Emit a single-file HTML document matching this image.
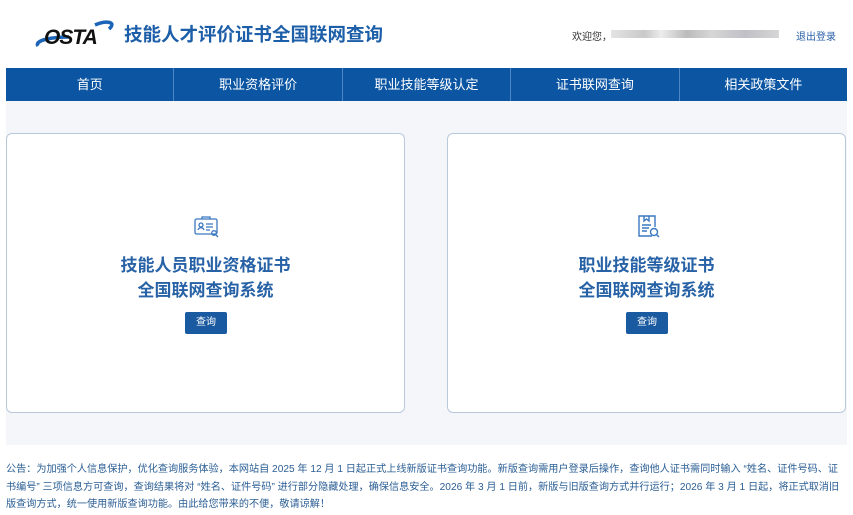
<!DOCTYPE html>
<html><head><meta charset="utf-8"><style>
*{margin:0;padding:0;box-sizing:border-box}
body{width:853px;height:515px;background:#fff;font-family:"Liberation Sans","Noto Sans CJK SC",sans-serif;position:relative;overflow:hidden}
.abs{position:absolute}
.title{left:124px;top:21px;font-size:18.5px;font-weight:bold;color:#1d5ea8;white-space:nowrap}
.nav{left:6px;top:68px;width:841px;height:33px;background:#0b55a3;display:flex}
.nav div{flex:1;color:#fff;font-size:13px;text-align:center;line-height:33px;border-right:1px solid #4d86c4}
.nav div:last-child{border-right:none}
.bg{left:6px;top:101px;width:841px;height:344px;background:#f4f6f9}
.card{top:133px;width:399px;height:280px;background:#fff;border:1px solid #b9c9dc;border-radius:6px;text-align:center}
.card h2{position:absolute;left:0;right:0;top:119px;font-size:17px;line-height:25px;color:#2862a6;font-weight:bold}
.btn{position:absolute;top:178px;width:42px;height:22px;background:#1a5aa0;color:#fff;font-size:10px;line-height:22px;border-radius:2px}
.note{left:6px;top:461px;width:842px;font-size:10.15px;line-height:17.5px;color:#2b5e94;word-break:break-all}
</style></head><body>
<svg class="abs" style="left:35px;top:16px" width="82" height="34" viewBox="0 0 82 34">
<path d="M3 30 C-1 24 18 21 34 21" stroke="#1c64b8" stroke-width="3.5" fill="none"/>
<path d="M60 9 C72 4 82 6 74 13" stroke="#1c64b8" stroke-width="3.5" fill="none"/>
<text x="9" y="28" font-family="Liberation Sans" font-style="italic" font-weight="bold" font-size="21" fill="#111" letter-spacing="-1">OSTA</text>
</svg>
<div class="abs title">技能人才评价证书全国联网查询</div>
<div class="abs" style="left:572px;top:28px;font-size:10px;color:#333">欢迎您，</div>
<div class="abs" style="left:611px;top:30px;width:168px;height:8px;background:linear-gradient(90deg,#ddd,#bbb 20%,#e8e8e8 30%,#aaa 45%,#ccc 60%,#b0b0b8 80%,#ccc);opacity:.8"></div>
<div class="abs" style="left:796px;top:28px;font-size:10px;color:#2a5fa8">退出登录</div>
<div class="abs nav"><div>首页</div><div>职业资格评价</div><div>职业技能等级认定</div><div>证书联网查询</div><div>相关政策文件</div></div>
<div class="abs bg"></div>
<div class="abs card" style="left:6px">
<svg class="abs" style="left:186px;top:81px" width="28" height="24" viewBox="0 0 28 24" fill="none" stroke="#3a78c0" stroke-width="1.3"><rect x="2" y="4" width="22" height="15" rx="1.5"/><path d="M9 4V2h8v2"/><circle cx="8" cy="10" r="2"/><path d="M5 15c1-3 5-3 6 0"/><path d="M13 9h7M13 12h7M13 15h4"/><circle cx="21" cy="18" r="2.3"/><path d="M23 20l2 2"/></svg>
<h2>技能人员职业资格证书<br>全国联网查询系统</h2>
<div class="btn" style="left:178px">查询</div></div>
<div class="abs card" style="left:447px">
<svg class="abs" style="left:187px;top:79px" width="28" height="28" viewBox="0 0 28 28" fill="none" stroke="#3a78c0" stroke-width="1.4"><path d="M17 23H4V3h16v11"/><path d="M9 3v5l2.5-2 2.5 2V3"/><path d="M7 12h9M7 15h7M7 18h5"/><circle cx="19" cy="19" r="3.5"/><path d="M21.5 21.5l2.5 2.5"/></svg>
<h2>职业技能等级证书<br>全国联网查询系统</h2>
<div class="btn" style="left:178px">查询</div></div>
<div class="abs note">公告：为加强个人信息保护，优化查询服务体验，本网站自 2025 年 12 月 1 日起正式上线新版证书查询功能。新版查询需用户登录后操作，查询他人证书需同时输入 “姓名、证件号码、证书编号” 三项信息方可查询，查询结果将对 “姓名、证件号码” 进行部分隐藏处理，确保信息安全。2026 年 3 月 1 日前，新版与旧版查询方式并行运行；2026 年 3 月 1 日起，将正式取消旧版查询方式，统一使用新版查询功能。由此给您带来的不便，敬请谅解！</div>
</body></html>
